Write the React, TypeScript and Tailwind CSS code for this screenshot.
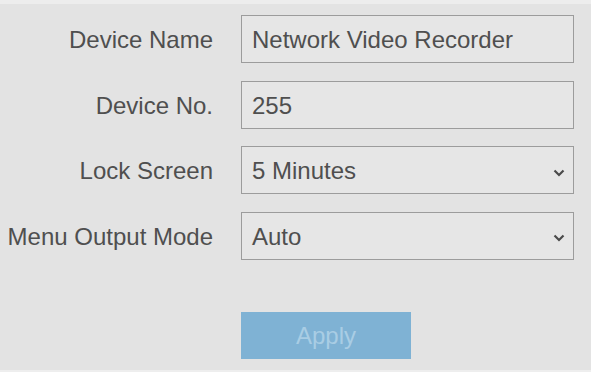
import React from "react";

const Chevron = () => (
  <svg width="12" height="8" viewBox="0 0 12 8" className="text-[#4a4a4a] mt-[3px]">
    <path d="M1.5 1.5 L6 6 L10.5 1.5" fill="none" stroke="currentColor" strokeWidth="2.2" />
  </svg>
);

const Row = ({ label, value, select }: { label: string; value: string; select?: boolean }) => (
  <div className="flex items-center h-[48px]">
    <div className="w-[213px] pt-[2px] text-right text-[24px] text-[#4f4f4f] whitespace-nowrap">{label}</div>
    <div className="ml-[28px] w-[333px] h-[48px] border border-[#9c9c9c] bg-[#e6e6e6] flex items-center justify-between pl-[10px] pr-[8px] pt-[2px] text-[24px] text-[#4f4f4f]">
      <span>{value}</span>
      {select && <Chevron />}
    </div>
  </div>
);

const App = () => {
  return (
    <div
      className="w-[591px] h-[372px] bg-[#e3e3e3] flex flex-col border-t-[4px] border-t-[#ededed] border-b-[2px] border-b-[#eeeeee]"
      style={{ fontFamily: '"Liberation Sans", Arial, sans-serif' }}
    >
      <div className="flex flex-col gap-[17.5px] pt-[11px]">
        <Row label="Device Name" value="Network Video Recorder" />
        <Row label="Device No." value="255" />
        <Row label="Lock Screen" value="5 Minutes" select />
        <Row label="Menu Output Mode" value="Auto" select />
      </div>
      <div className="pl-[241px] pt-[52px]">
        <button className="w-[170px] h-[47px] bg-[#7fb2d4] text-[#a9cde4] text-[24px] pt-[2px]">Apply</button>
      </div>
    </div>
  );
};

export default App;
